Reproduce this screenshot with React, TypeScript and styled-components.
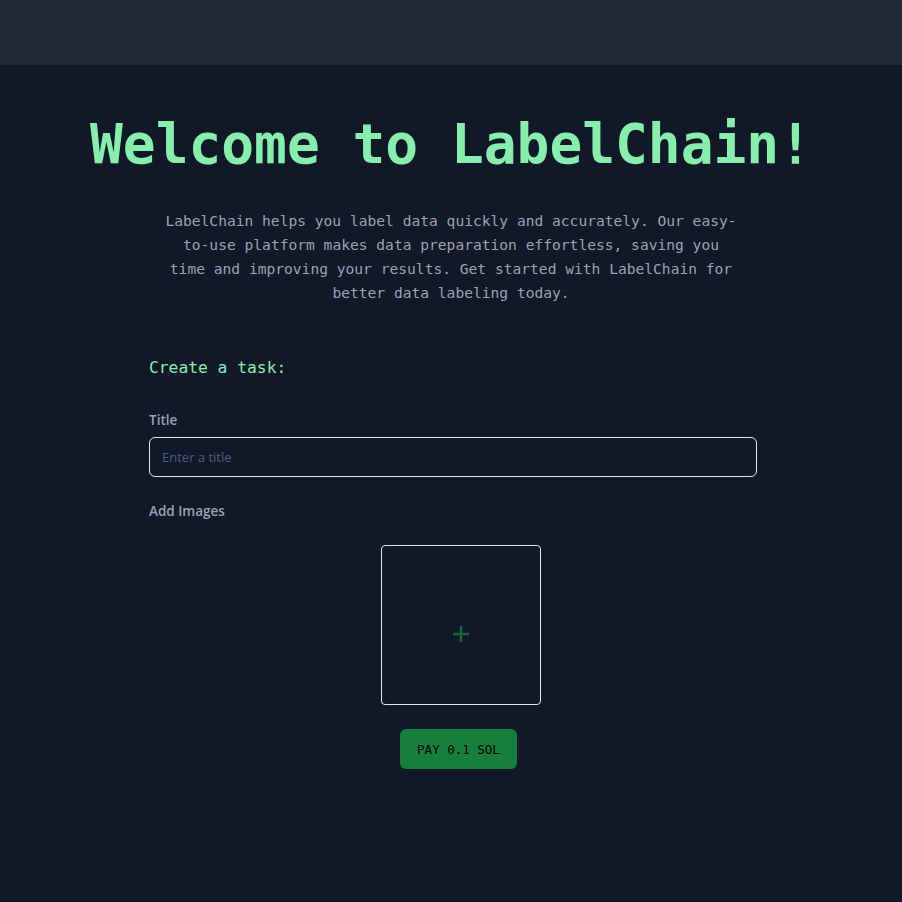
import React from "react";
import styled, { createGlobalStyle } from "styled-components";

const GlobalStyle = createGlobalStyle`
  html, body {
    margin: 0;
    padding: 0;
    background: #111827;
  }
  * { box-sizing: border-box; }
`;

const Page = styled.div`
  min-height: 902px;
  background: #111827;
  display: flex;
  flex-direction: column;
`;

const TopBar = styled.header`
  height: 65px;
  background: #1f2937;
  flex-shrink: 0;
`;

const Main = styled.main`
  display: flex;
  flex-direction: column;
  align-items: center;
  padding-top: 49px;
`;

const Heading = styled.h1`
  margin: 0;
  font-family: "DejaVu Sans Mono", "Liberation Mono", monospace;
  font-size: 54.5px;
  line-height: 60px;
  font-weight: 700;
  color: #86efac;
  text-align: center;
  white-space: nowrap;
`;

const Intro = styled.p`
  margin: 35px 0 0;
  width: 576px;
  font-family: "DejaVu Sans Mono", "Liberation Mono", monospace;
  font-size: 14.6px;
  line-height: 24px;
  color: #9ca3af;
  text-align: center;
`;

const Form = styled.section`
  width: 612px;
  padding-left: 4px;
  margin-top: 53px;
  display: flex;
  flex-direction: column;
`;

const FormTitle = styled.h2`
  margin: 0;
  font-family: "DejaVu Sans Mono", "Liberation Mono", monospace;
  font-size: 16.3px;
  line-height: 20px;
  font-weight: 400;
  color: #86efac;
`;

const Label = styled.label<{ $gap: number }>`
  display: block;
  margin-top: ${(p) => p.$gap}px;
  font-family: "Open Sans", "Noto Sans", sans-serif;
  font-size: 13.5px;
  line-height: 20px;
  font-weight: 600;
  color: #9ca3af;
`;

const TextInput = styled.input`
  margin-top: 7px;
  width: 100%;
  height: 40px;
  padding: 0 12px;
  background: #111827;
  border: 1px solid #e5e7eb;
  border-radius: 6px;
  font-family: "Open Sans", "Noto Sans", sans-serif;
  font-size: 13px;
  color: #e5e7eb;
  outline: none;
  &::placeholder {
    color: #4b5e80;
  }
`;

const CenterRow = styled.div<{ $shift: number; $gap: number }>`
  display: flex;
  justify-content: center;
  padding-left: ${(p) => p.$shift}px;
  margin-top: ${(p) => p.$gap}px;
`;

const UploadBox = styled.div`
  width: 160px;
  height: 160px;
  border: 1px solid #e5e7eb;
  border-radius: 4px;
  display: flex;
  align-items: center;
  justify-content: center;
  padding-top: 18px;
  cursor: pointer;
`;

const PayButton = styled.button`
  height: 40px;
  width: 117px;
  border: none;
  border-radius: 6px;
  background: #15803d;
  color: #000000;
  font-family: "DejaVu Sans Mono", "Liberation Mono", monospace;
  font-size: 12.5px;
  cursor: pointer;
`;

const PlusIcon = () => (
  <svg width="18" height="18" viewBox="0 0 18 18" aria-hidden="true">
    <path d="M9 1v16M1 9h16" stroke="#166534" strokeWidth="2.5" fill="none" />
  </svg>
);

export default function App() {
  return (
    <>
      <GlobalStyle />
      <Page>
        <TopBar />
        <Main>
          <Heading>Welcome to LabelChain!</Heading>
          <Intro>
            LabelChain helps you label data quickly and accurately. Our easy-to-use platform makes data
            preparation effortless, saving you time and improving your results. Get started with
            LabelChain for better data labeling today.
          </Intro>
          <Form>
            <FormTitle>Create a task:</FormTitle>
            <Label $gap={32} htmlFor="title">Title</Label>
            <TextInput id="title" placeholder="Enter a title" />
            <Label $gap={24}>Add Images</Label>
            <CenterRow $shift={16} $gap={24}>
              <UploadBox>
                <PlusIcon />
              </UploadBox>
            </CenterRow>
            <CenterRow $shift={11} $gap={24}>
              <PayButton>PAY 0.1 SOL</PayButton>
            </CenterRow>
          </Form>
        </Main>
      </Page>
    </>
  );
}
